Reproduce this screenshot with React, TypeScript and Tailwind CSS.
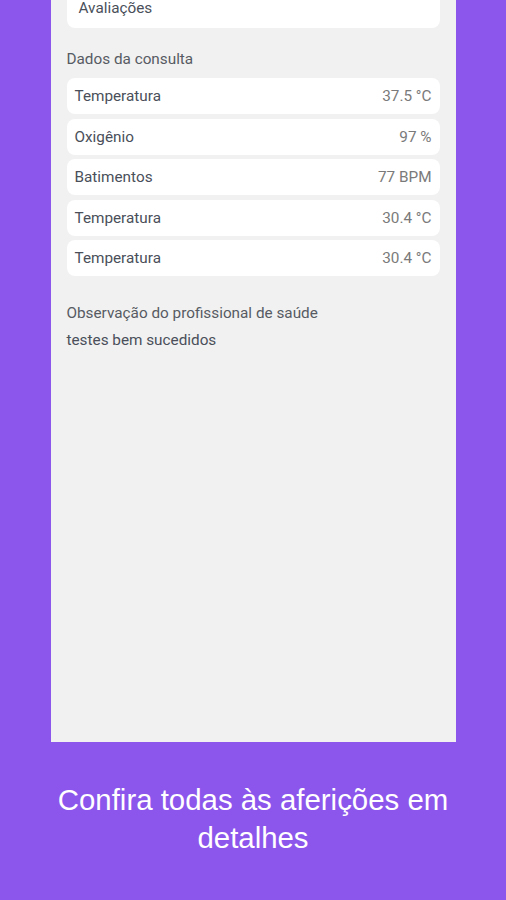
const rows = [
  { label: 'Temperatura', value: '37.5 °C' },
  { label: 'Oxigênio', value: '97 %' },
  { label: 'Batimentos', value: '77 BPM' },
  { label: 'Temperatura', value: '30.4 °C' },
  { label: 'Temperatura', value: '30.4 °C' },
];

export default function App() {
  return (
    <div className="w-[506px] h-[900px] overflow-hidden bg-[#8c55ec] flex flex-col items-center">
      <div className="w-[405px] h-[742px] shrink-0 bg-[#f1f1f1] px-4 overflow-hidden font-['Roboto',sans-serif] text-[15.3px] leading-[18px]">
        <div className="-mt-[20px] h-[48px] bg-white rounded-lg px-3 flex items-end pb-[11px] text-[#4a4f5a]">
          Avaliações
        </div>

        <p className="mt-[22px] text-[#575b63]">Dados da consulta</p>

        <div className="mt-[10px] flex flex-col gap-[4.5px]">
          {rows.map((r, i) => (
            <div key={i} className="h-[36px] bg-white rounded-lg px-2 flex items-center justify-between">
              <span className="text-[#4a4f5a]">{r.label}</span>
              <span className="text-[#7a7a7a]">{r.value}</span>
            </div>
          ))}
        </div>

        <p className="mt-[28px] text-[#575b63]">Observação do profissional de saúde</p>
        <p className="mt-[9px] text-[#4a4f5a]">testes bem sucedidos</p>
      </div>

      <p className="mt-[39px] w-[440px] text-center text-white text-[29.4px] leading-[38px] font-['Liberation_Sans',Arial,sans-serif]">
        Confira todas às aferições em detalhes
      </p>
    </div>
  );
}
